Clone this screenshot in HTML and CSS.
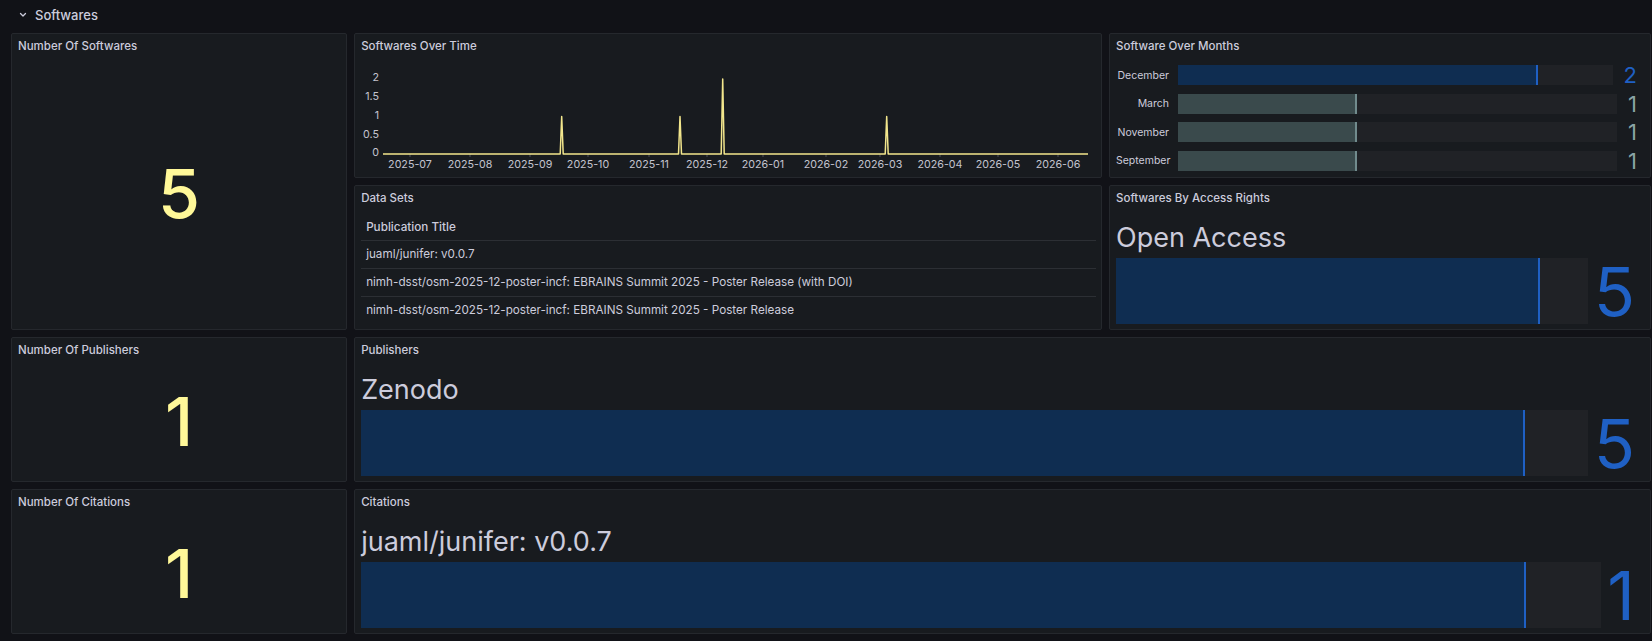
FILE: index.html
```html
<html><head><link rel="stylesheet" href="styles.css"></head><body>
<div class="row-head">
  <svg class="chev" width="10" height="8" viewBox="0 0 10 8"><polyline points="2.5,2.5 5,5 7.5,2.5"/></svg>
  <span>Softwares</span>
</div>
<div class="grid">
  <div class="panel w5 tall">
    <div class="ptitle">Number Of Softwares</div>
    <div class="stat">5</div>
  </div>

  <div class="panel w11">
    <div class="ptitle">Softwares Over Time</div>
    <svg class="chart" width="746" height="117" viewBox="0 0 746 117">
      <g class="ylab">
        <text x="24" y="18.5">2</text>
        <text x="24" y="37.2">1.5</text>
        <text x="24" y="56">1</text>
        <text x="24" y="74.7">0.5</text>
        <text x="24" y="93.4">0</text>
      </g>
      <g class="ticks">
        <line x1="55" y1="94" x2="55" y2="97"/><line x1="115" y1="94" x2="115" y2="97"/>
        <line x1="175" y1="94" x2="175" y2="97"/><line x1="233" y1="94" x2="233" y2="97"/>
        <line x1="294" y1="94" x2="294" y2="97"/><line x1="352" y1="94" x2="352" y2="97"/>
        <line x1="408" y1="94" x2="408" y2="97"/><line x1="471" y1="94" x2="471" y2="97"/>
        <line x1="525" y1="94" x2="525" y2="97"/><line x1="585" y1="94" x2="585" y2="97"/>
        <line x1="643" y1="94" x2="643" y2="97"/><line x1="703" y1="94" x2="703" y2="97"/>
      </g>
      <g class="xlab">
        <text x="55" y="105.5">2025-07</text>
        <text x="115" y="105.5">2025-08</text>
        <text x="175" y="105.5">2025-09</text>
        <text x="233" y="105.5">2025-10</text>
        <text x="294" y="105.5">2025-11</text>
        <text x="352" y="105.5">2025-12</text>
        <text x="408" y="105.5">2026-01</text>
        <text x="471" y="105.5">2026-02</text>
        <text x="525" y="105.5">2026-03</text>
        <text x="585" y="105.5">2026-04</text>
        <text x="643" y="105.5">2026-05</text>
        <text x="703" y="105.5">2026-06</text>
      </g>
      <polyline class="series" points="28,94 205.2,94 206.7,56.5 208.2,94 323.5,94 325,56.5 326.5,94 366.2,94 367.7,19 369.2,94 530.2,94 531.7,56.5 533.2,94 733,94"/>
    </svg>
  </div>

  <div class="panel w8">
    <div class="ptitle">Software Over Months</div>
    <div class="months">
      <div class="mrow">
        <span class="mlabel">December</span>
        <div class="track"><div class="fill blue" style="width:82.9%"></div></div>
        <span class="mval blue-text">2</span>
      </div>
      <div class="mrow">
        <span class="mlabel">March</span>
        <div class="track"><div class="fill grey" style="width:40.8%"></div></div>
        <span class="mval grey-text">1</span>
      </div>
      <div class="mrow">
        <span class="mlabel">November</span>
        <div class="track"><div class="fill grey" style="width:40.8%"></div></div>
        <span class="mval grey-text">1</span>
      </div>
      <div class="mrow">
        <span class="mlabel">September</span>
        <div class="track"><div class="fill grey" style="width:40.8%"></div></div>
        <span class="mval grey-text">1</span>
      </div>
    </div>
  </div>

  <div class="panel w11">
    <div class="ptitle">Data Sets</div>
    <div class="tablewrap">
      <table class="dtable">
        <tr><th>Publication Title</th></tr>
        <tr><td>juaml/junifer: v0.0.7</td></tr>
        <tr><td>nimh-dsst/osm-2025-12-poster-incf: EBRAINS Summit 2025 - Poster Release (with DOI)</td></tr>
        <tr><td>nimh-dsst/osm-2025-12-poster-incf: EBRAINS Summit 2025 - Poster Release</td></tr>
      </table>
    </div>
  </div>

  <div class="panel w8">
    <div class="ptitle">Softwares By Access Rights</div>
    <div class="gauge">
      <div class="gname">Open Access</div>
      <div class="grow">
        <div class="track big"><div class="fill blue" style="width:89.8%"></div></div>
        <span class="gval">5</span>
      </div>
    </div>
  </div>

  <div class="panel w5">
    <div class="ptitle">Number Of Publishers</div>
    <div class="stat">1</div>
  </div>

  <div class="panel w19">
    <div class="ptitle">Publishers</div>
    <div class="gauge">
      <div class="gname">Zenodo</div>
      <div class="grow">
        <div class="track big"><div class="fill blue" style="width:94.9%"></div></div>
        <span class="gval">5</span>
      </div>
    </div>
  </div>

  <div class="panel w5">
    <div class="ptitle">Number Of Citations</div>
    <div class="stat">1</div>
  </div>

  <div class="panel w19">
    <div class="ptitle">Citations</div>
    <div class="gauge">
      <div class="gname">juaml/junifer: v0.0.7</div>
      <div class="grow">
        <div class="track big"><div class="fill blue" style="width:93.9%"></div></div>
        <span class="gval">1</span>
      </div>
    </div>
  </div>
</div>
</body></html>
```

FILE: styles.css
```css
body{margin:0;background:#111217;color:#ccccdc;font-family:Inter,"Noto Sans",sans-serif;width:1652px;height:641px;overflow:hidden;}

.row-head{height:33px;box-sizing:border-box;padding:0 0 3px 18px;display:flex;align-items:center;gap:7px;font-size:13px;font-weight:500;}
.chev polyline{fill:none;stroke:#ccccdc;stroke-width:1.3;stroke-linecap:round;stroke-linejoin:round;}

.grid{display:grid;grid-template-columns:repeat(24,1fr);grid-auto-rows:145px;gap:7px;padding:0 1px 0 11px;}
.w5{grid-column:span 5;}
.w8{grid-column:span 8;}
.w11{grid-column:span 11;}
.w19{grid-column:span 19;}
.tall{grid-row:span 2;}

.panel{background:#181b1f;border:1px solid #25282d;border-radius:2px;display:flex;flex-direction:column;min-width:0;}
.ptitle{flex:none;height:26px;line-height:24px;padding:0 6px;font-size:11.5px;font-weight:500;color:#ccccdc;white-space:nowrap;}

/* big single numbers */
.stat{flex:1;display:flex;align-items:center;justify-content:center;padding-bottom:3px;font-size:68px;font-weight:500;color:#fff899;}

/* time series */
.chart{display:block;}
.chart text{font-family:Inter,sans-serif;font-size:10.7px;fill:#c4c4cf;dominant-baseline:middle;}
.ylab text{text-anchor:end;}
.xlab text{text-anchor:middle;}
.ticks line{stroke:rgba(204,204,220,0.3);stroke-width:1;}
.series{fill:none;stroke:#f2e68c;stroke-width:1.5;stroke-linejoin:round;}

/* bar gauges */
.track{flex:1;height:20px;background:#202226;display:flex;}
.track.big{height:66px;}
.fill{height:100%;box-sizing:border-box;}
.fill.blue{background:#0f2d51;border-right:2px solid #1f60c4;}
.fill.grey{background:#3a4a4c;border-right:2px solid #718b8d;}

.months{display:flex;flex-direction:column;gap:8.5px;padding:5px 13px 0 6px;}
.mrow{display:flex;align-items:center;height:20px;}
.mlabel{width:53px;margin-right:9px;text-align:right;font-size:10.5px;color:#ccccdc;white-space:nowrap;}
.mval{margin-left:11px;font-size:22px;line-height:20px;}
.blue-text{color:#1f60c4;}
.grey-text{color:#8aa4a5;}

.gauge{padding:9px 15px 0 6px;}
.gname{font-size:27px;line-height:34px;color:#ccccdc;white-space:nowrap;margin-bottom:3px;}
.grow{display:flex;align-items:center;height:66px;}
.gval{margin-left:6px;font-size:68px;line-height:1;color:#1f60c4;}

/* table */
.tablewrap{padding:0 5px 0 6px;}
.dtable{width:100%;border-collapse:collapse;font-size:11.7px;color:#ccccdc;}
.dtable th{height:28px;text-align:left;font-weight:500;padding:3px 5px 0;box-sizing:border-box;border-bottom:1px solid #2c2f34;}
.dtable td{height:28px;padding:0 5px;border-bottom:1px solid #2c2f34;}
.dtable tr:last-child td{border-bottom:none;}
```
